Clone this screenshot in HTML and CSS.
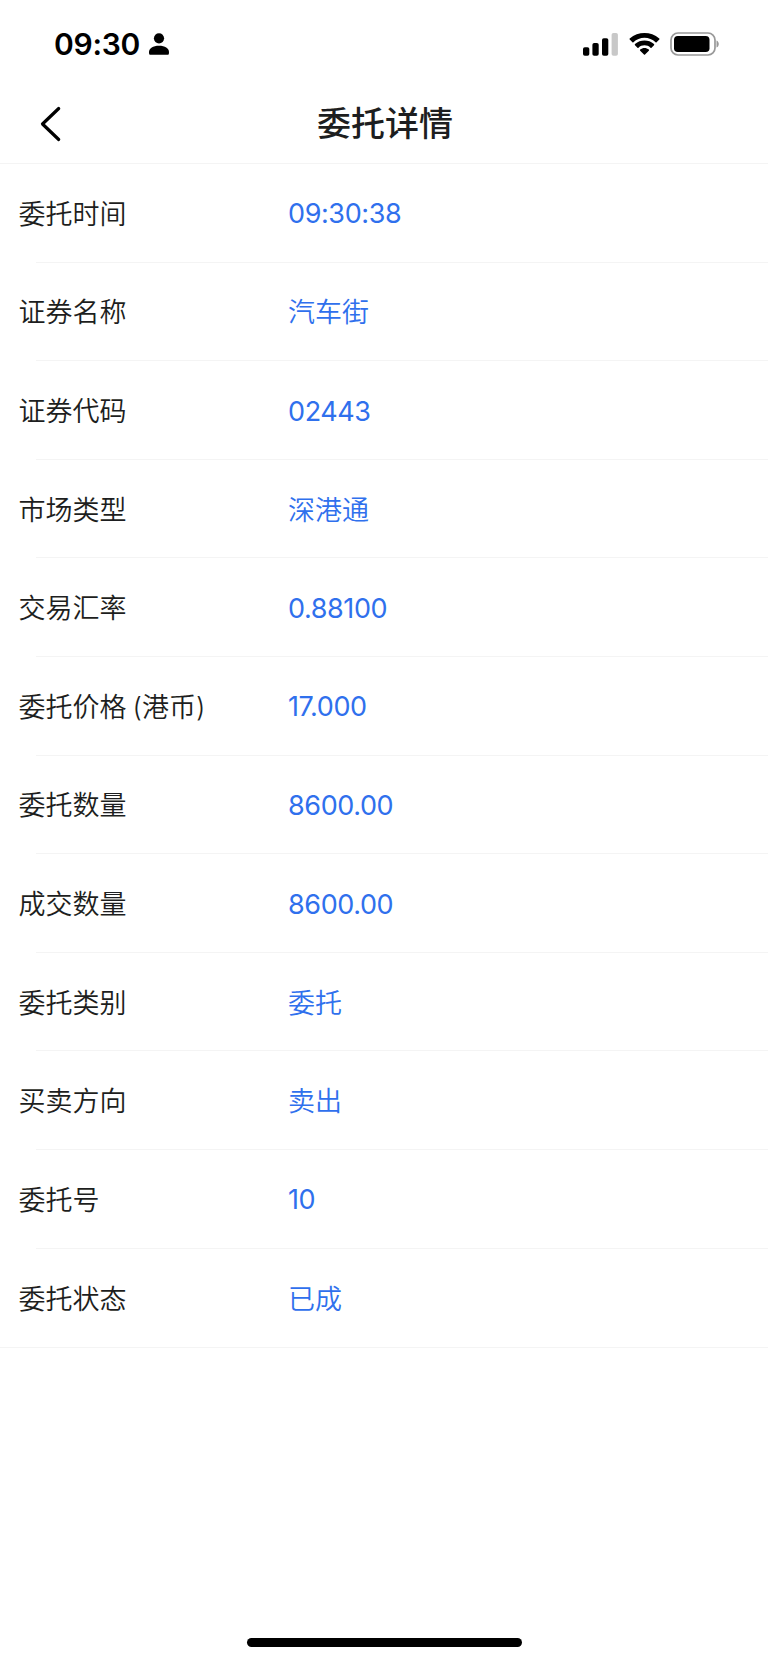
FILE: index.html
```html
<!DOCTYPE html>
<html lang="zh-CN">
<head>
    <meta charset="UTF-8">
    <meta name="viewport" content="width=device-width, initial-scale=1.0">
    <title>委托详情</title>
    <link rel="stylesheet" href="styles.css">
</head>
<body>

<div class="page">
    <div class="status-bar">
        <span class="time">09:30</span>
        <svg class="icon-user" width="20" height="22" viewBox="0 0 20 22">
            <circle cx="10" cy="5.3" r="5.1"/>
            <path d="M0 19.200C0 15.500 4 12.800 10 12.800S20 15.500 20 19.200C20 21 19.600 21.800 18.600 21.800H1.400C.4 21.800 0 21 0 19.200Z"/>
        </svg>
        <div class="status-icons">
            <svg width="36" height="23" viewBox="0 0 36 23">
                <rect x="0" y="14.200" width="6.300" height="8.600" rx="1.800"/>
                <rect x="9.400" y="10" width="6.300" height="12.800" rx="1.800"/>
                <rect x="19" y="5.200" width="6.300" height="17.600" rx="1.800"/>
                <rect x="28.600" y="0" width="6.300" height="22.800" rx="1.800" fill="#c8c8c8"/>
            </svg>
            <svg width="31" height="23" viewBox="0 0 30 22" preserveAspectRatio="none">
                <path d="M15 4.500C19 4.500 22.800 6 25.700 8.800Q26.200 9.200 26.700 8.800L29.300 6.200Q29.800 5.700 29.300 5.200C21 -1.700 9 -1.700 .7 5.200Q.2 5.700 .7 6.200L3.300 8.800Q3.800 9.200 4.300 8.800C7.200 6 11 4.500 15 4.500Z"/>
                <path d="M15 11.800C17.200 11.800 19.200 12.600 20.800 14Q21.300 14.500 21.800 14L24.200 11.600Q24.700 11 24.200 10.500C18.900 6.100 11.100 6.100 5.800 10.500Q5.300 11 5.800 11.600L8.200 14Q8.700 14.500 9.200 14C10.800 12.600 12.800 11.800 15 11.800Z"/>
                <path d="M19.200 16.900Q19.700 16.400 19.200 15.900C16.800 13.900 13.200 13.900 10.800 15.900Q10.300 16.400 10.800 16.900L14.500 20.600Q15 21.100 15.500 20.600Z"/>
            </svg>
            <svg width="49" height="24" viewBox="0 0 49 24">
                <rect x="1" y="1" width="44" height="22" rx="7" fill="none" stroke="#999" stroke-width="1.700"/>
                <rect x="4" y="4" width="35.500" height="16" rx="3.800"/>
                <path d="M46.500 8.500C49.500 9.500 49.500 14.500 46.500 15.500Z" fill="#999"/>
            </svg>
        </div>
    </div>

    <div class="header">
        <svg class="icon-back" width="22" height="36" viewBox="0 0 22 36">
            <path d="M18.700 2.500L2.500 18L18.700 33.500" fill="none" stroke="#000" stroke-width="3.200" stroke-linecap="round" stroke-linejoin="round"/>
        </svg>
        <h1>委托详情</h1>
    </div>

    <div class="list">
        <div class="row"><span class="label">委托时间</span><span class="value number">09:30:38</span></div>
        <div class="row"><span class="label">证券名称</span><span class="value">汽车街</span></div>
        <div class="row"><span class="label">证券代码</span><span class="value number">02443</span></div>
        <div class="row"><span class="label">市场类型</span><span class="value">深港通</span></div>
        <div class="row"><span class="label">交易汇率</span><span class="value number">0.88100</span></div>
        <div class="row"><span class="label">委托价格 (港币)</span><span class="value number">17.000</span></div>
        <div class="row"><span class="label">委托数量</span><span class="value number">8600.00</span></div>
        <div class="row"><span class="label">成交数量</span><span class="value number">8600.00</span></div>
        <div class="row"><span class="label">委托类别</span><span class="value">委托</span></div>
        <div class="row"><span class="label">买卖方向</span><span class="value">卖出</span></div>
        <div class="row"><span class="label">委托号</span><span class="value number">10</span></div>
        <div class="row"><span class="label">委托状态</span><span class="value">已成</span></div>
    </div>

    <div class="home-bar"></div>
</div>

</body>
</html>
```
FILE: styles.css
```css
* {
    box-sizing: border-box;
}

body {
    margin: 0;
    font-family: Inter, "Noto Sans CJK SC", sans-serif;
    background-color: #fff;
    color: #1d1e20;
}

.page {
    display: flex;
    flex-direction: column;
    height: 1662px;
}

.status-bar {
    display: flex;
    align-items: center;
    height: 88px;
    padding: 0 49px 0 54px;
    color: #000;
}

.time {
    width: 86px;
    font-size: 30px;
    font-weight: 600;
    letter-spacing: -0.3px;
    white-space: nowrap;
}

.icon-user {
    margin-left: 9px;
}

.status-icons {
    display: flex;
    align-items: center;
    gap: 10px;
    margin-left: auto;
}

.header {
    display: flex;
    align-items: center;
    height: 76px;
    padding: 0 40px 4px;
    border-bottom: 1px solid #f4f4f4;
}

h1 {
    flex: 1;
    margin: 0 20px 0 0;
    padding-bottom: 5px;
    font-size: 34px;
    font-weight: 500;
    text-align: center;
}

.list {
    border-bottom: 1px solid #f4f4f4;
}

.row {
    display: flex;
    align-items: center;
    height: 98.620px;
    padding-left: 18.500px;
    font-size: 27px;
    font-weight: 350;
    background: linear-gradient(#f4f4f4, #f4f4f4) 36px 100% / 100% 1px no-repeat;
}

.row:last-child {
    background: none;
}

.label {
    width: 269.500px;
    padding-bottom: 2px;
    word-spacing: -1.500px;
}

.value {
    padding-bottom: 2px;
    color: #2f70ed;
}

.number {
    padding: 1px 0 0;
    font-weight: 380;
    letter-spacing: -0.4px;
}

.home-bar {
    width: 275px;
    height: 9px;
    margin: auto auto 15px;
    border-radius: 5px;
    background-color: #000;
}
```
